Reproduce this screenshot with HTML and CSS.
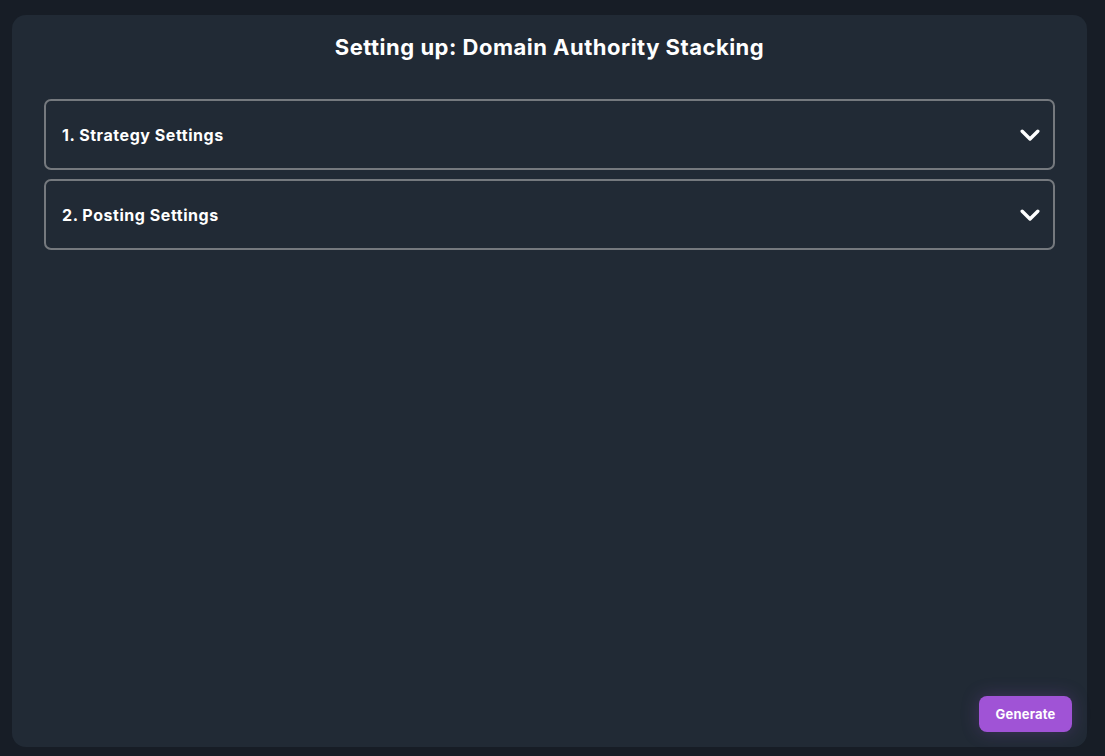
FILE: index.html
```html
<!DOCTYPE html>
<html>
<head>
<meta charset="utf-8">
<link rel="stylesheet" href="styles.css">
</head>
<body>
<div class="panel">
  <h1 class="title">Setting up: Domain Authority Stacking</h1>
  <div class="sections">
    <div class="acc">
      <span class="acc-label">1. Strategy Settings</span>
      <svg class="chev" viewBox="0 0 20 13" width="20" height="13"><path d="M2.2 2.2 L10 10 L17.8 2.2" fill="none" stroke="#fff" stroke-width="3.4" stroke-linecap="round" stroke-linejoin="round"/></svg>
    </div>
    <div class="acc">
      <span class="acc-label">2. Posting Settings</span>
      <svg class="chev" viewBox="0 0 20 13" width="20" height="13"><path d="M2.2 2.2 L10 10 L17.8 2.2" fill="none" stroke="#fff" stroke-width="3.4" stroke-linecap="round" stroke-linejoin="round"/></svg>
    </div>
  </div>
  <div class="footer">
    <button class="gen">Generate</button>
  </div>
</div>
</body>
</html>
```
FILE: styles.css
```css
html, body {
  margin: 0;
  padding: 0;
  background: #171d26;
  height: 100%;
}
body {
  padding: 15px 18px 9px 12px;
  box-sizing: border-box;
  font-family: Inter, "Open Sans", sans-serif;
  color: #fff;
}
.panel {
  height: 100%;
  background: #212a35;
  border-radius: 14px;
  display: flex;
  flex-direction: column;
  padding: 0 32px 15px 32px;
  box-sizing: border-box;
}
.title {
  margin: 0;
  padding-top: 19px;
  height: 84px;
  box-sizing: border-box;
  text-align: center;
  font-size: 22px;
  font-weight: 700;
  line-height: 26px;
  letter-spacing: 0.5px;
}
.sections {
  display: flex;
  flex-direction: column;
  gap: 9px;
}
.acc {
  height: 71px;
  box-sizing: border-box;
  border: 2px solid #75797e;
  border-radius: 7px;
  display: flex;
  align-items: center;
  justify-content: space-between;
  padding: 0 13px 0 16px;
}
.acc-label {
  font-size: 16px;
  font-weight: 700;
  letter-spacing: 0.55px;
}
.chev {
  display: block;
  margin-top: 1px;
}
.footer {
  margin-top: auto;
  margin-right: -17px;
  display: flex;
  justify-content: flex-end;
}
.gen {
  width: 93px;
  height: 36px;
  border: none;
  border-radius: 8px;
  background: #a053d6;
  color: #fff;
  font-family: Inter, sans-serif;
  font-weight: 700;
  font-size: 13px;
  letter-spacing: 0.2px;
  box-shadow: 0 0 18px rgba(160, 83, 214, 0.25);
  cursor: pointer;
}
```
